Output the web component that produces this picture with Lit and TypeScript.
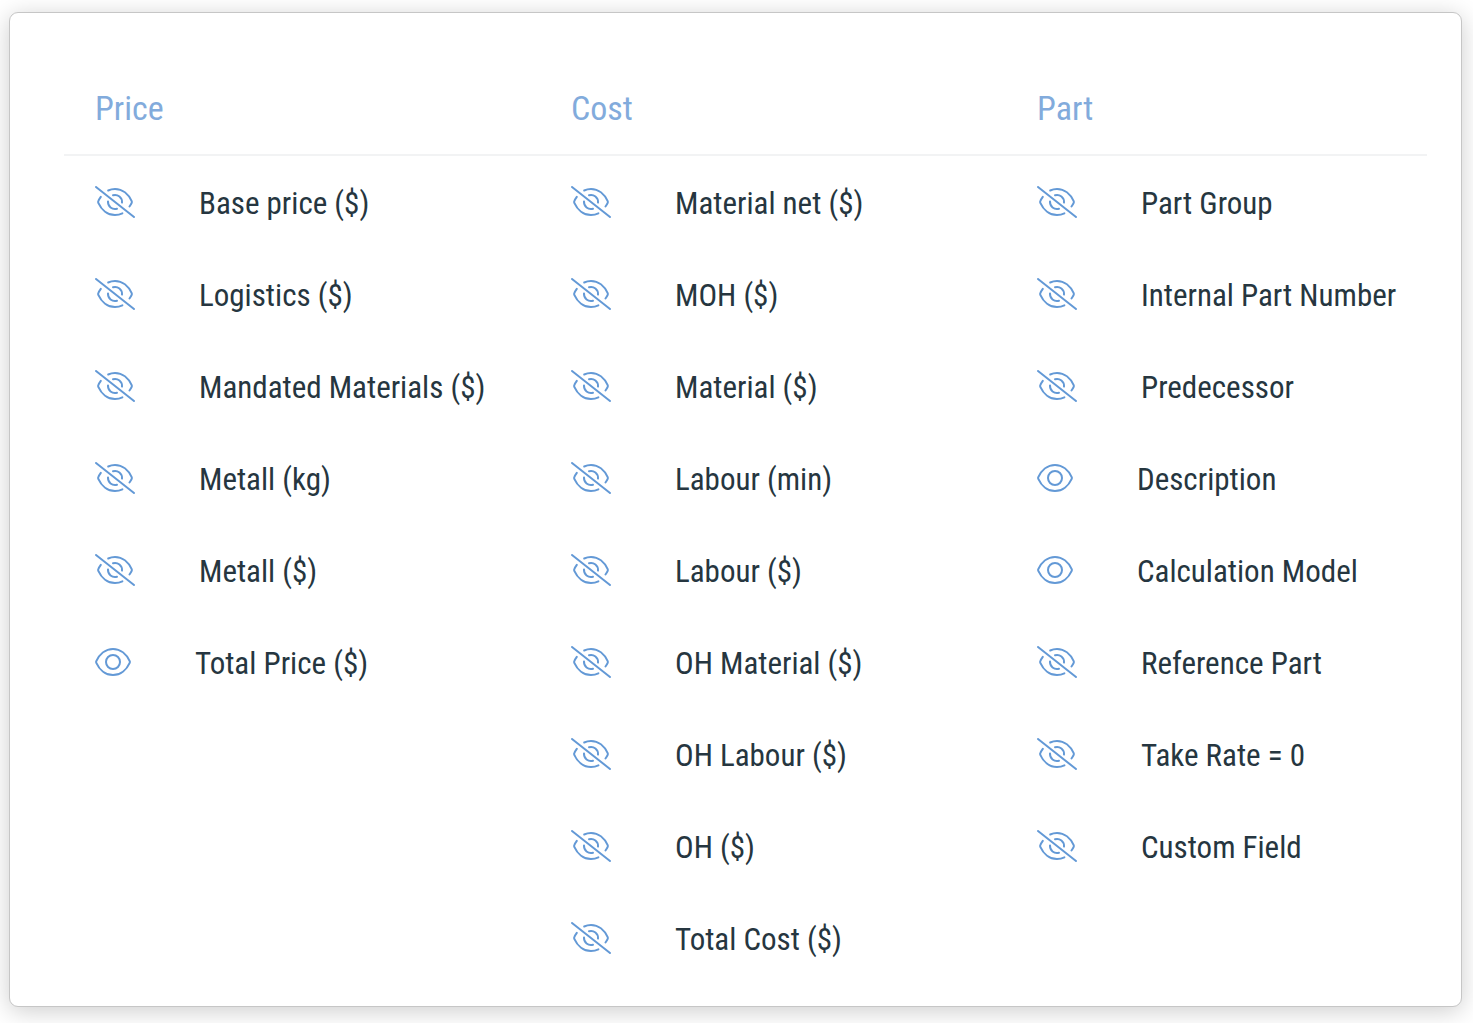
import { LitElement, html, css, svg } from "lit";
import { customElement, property, state } from "lit/decorators.js";

interface Field {
  label: string;
  visible: boolean;
}

interface FieldGroup {
  title: string;
  fields: Field[];
}

const group = (title: string, labels: string, shown: string[] = []): FieldGroup => ({
  title,
  fields: labels.split("|").map((label) => ({ label, visible: shown.includes(label) })),
});

const GROUPS: FieldGroup[] = [
  group(
    "Price",
    "Base price ($)|Logistics ($)|Mandated Materials ($)|Metall (kg)|Metall ($)|Total Price ($)",
    ["Total Price ($)"]
  ),
  group(
    "Cost",
    "Material net ($)|MOH ($)|Material ($)|Labour (min)|Labour ($)|OH Material ($)|OH Labour ($)|OH ($)|Total Cost ($)"
  ),
  group(
    "Part",
    "Part Group|Internal Part Number|Predecessor|Description|Calculation Model|Reference Part|Take Rate = 0|Custom Field",
    ["Description", "Calculation Model"]
  ),
];

@customElement("eye-icon")
export class EyeIcon extends LitElement {
  @property({ type: Boolean }) open = false;

  static styles = css`
    :host {
      display: block;
      flex: none;
      color: #6399d6;
    }
    .icon {
      display: block;
      height: 32px;
      fill: none;
      stroke: currentColor;
      stroke-width: 2;
      stroke-linecap: round;
      stroke-linejoin: round;
    }
    .open {
      width: 36px;
    }
    .closed {
      width: 40px;
    }
  `;

  render() {
    return this.open
      ? html`<svg class="icon open" viewBox="0 0 36 32" aria-hidden="true">
          ${svg`
            <path d="M1.3 15.2C4.3 8.6 10.3 3 18 3s13.700 5.600 16.700 12.200a2 2 0 0 1 0 1.600C31.700 23.400 25.700 29 18 29S4.300 23.400 1.300 16.800a2 2 0 0 1 0-1.600Z"/>
            <circle cx="18" cy="16" r="7"/>`}
        </svg>`
      : html`<svg class="icon closed" viewBox="0 0 40 32" aria-hidden="true">
          ${svg`
            <path d="M1 1l38 30"/>
            <path d="M13.200 4.500C15.300 3.500 17.600 3 20 3c7.700 0 13.700 5.600 16.700 12.200a2 2 0 0 1 0 1.600c-.6 1.300-1.300 2.500-2.200 3.700"/>
            <path d="M5.800 10.900c-1 1.400-1.900 2.800-2.500 4.300a2 2 0 0 0 0 1.600C6.300 23.400 12.300 29 20 29c2.700 0 5.200-.6 7.400-1.700"/>
            <path d="M18 9.300A7 7 0 0 1 27 16.600"/>
            <path d="M13 15.400A7 7 0 0 0 22 22.700"/>`}
        </svg>`;
  }
}

@customElement("app-root")
export class AppRoot extends LitElement {
  @state() private groups: FieldGroup[] = GROUPS;

  static styles = css`
    :host {
      display: block;
      box-sizing: border-box;
      padding: 12px 11px 16px 9px;
      background: #fff;
      font-family: "Roboto Condensed", "Liberation Sans Narrow", Roboto, sans-serif;
      color: #263640;
    }
    .card {
      display: grid;
      grid-template-columns: 476fr 466fr 421fr;
      padding: 49px 34px 22px 54px;
      background: #fff;
      border: 1px solid #c6c6c6;
      border-radius: 9px;
      box-shadow: 0 4px 24px rgba(0, 0, 0, 0.2);
    }
    .title {
      display: flex;
      align-items: center;
      height: 92px;
      margin: 0;
      padding-left: 31px;
      border-bottom: 2px solid #f2f3f4;
      font-size: 34px;
      font-weight: 400;
      color: #82abdc;
    }
    .list {
      margin: 0;
      padding: 0 0 0 31px;
      list-style: none;
    }
    .toggle {
      display: flex;
      align-items: center;
      gap: 64px;
      height: 92px;
      padding: 0;
      border: 0;
      background: none;
      font: inherit;
      font-size: 31px;
      color: inherit;
      white-space: nowrap;
      cursor: pointer;
    }
    .label {
      padding-top: 2px;
    }
  `;

  private toggle(target: Field) {
    this.groups = this.groups.map((g) => ({
      ...g,
      fields: g.fields.map((f) => (f === target ? { ...f, visible: !f.visible } : f)),
    }));
  }

  render() {
    return html`<main class="card">
      ${this.groups.map(
        (g) => html`<section>
          <h2 class="title">${g.title}</h2>
          <ul class="list">
            ${g.fields.map(
              (f) => html`<li>
                <button
                  class="toggle"
                  type="button"
                  aria-pressed=${f.visible ? "true" : "false"}
                  @click=${() => this.toggle(f)}
                >
                  <eye-icon ?open=${f.visible}></eye-icon>
                  <span class="label">${f.label}</span>
                </button>
              </li>`
            )}
          </ul>
        </section>`
      )}
    </main>`;
  }
}
